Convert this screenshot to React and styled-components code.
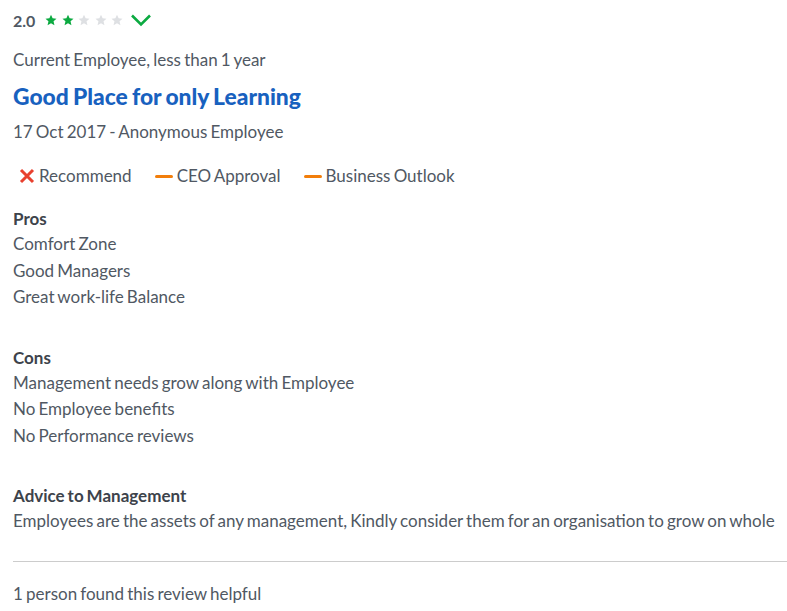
import styled, { createGlobalStyle } from "styled-components";

const GlobalStyle = createGlobalStyle`
  body {
    margin: 0;
    background: #fff;
    font-family: Lato, "Noto Sans", sans-serif;
    color: #505863;
  }
`;

const Star = ({ filled }) => (
  <svg width="12" height="12" viewBox="0 0 24 24">
    <path
      d="M12 1.5l3.2 7.2 7.8.7-5.9 5.2 1.8 7.7L12 18.3l-6.9 4 1.8-7.7L1 9.4l7.8-.7z"
      fill={filled ? "#0caa41" : "#dee0e3"}
    />
  </svg>
);

const Chevron = () => (
  <svg width="22" height="14" viewBox="0 0 22 14">
    <path d="M2 2.5l9 9 9-9" fill="none" stroke="#0caa41" strokeWidth="2.6" />
  </svg>
);

const Cross = () => (
  <svg width="16" height="16" viewBox="0 0 16 16">
    <path d="M2 2l12 12M14 2L2 14" stroke="#e8412f" strokeWidth="3" />
  </svg>
);

const Review = () => {
  const rating = 2;
  return (
    <Wrapper>
      <RatingRow>
        <Score>2.0</Score>
        <Stars>
          {[1, 2, 3, 4, 5].map((n) => (
            <Star key={n} filled={n <= rating} />
          ))}
        </Stars>
        <ChevronBox>
          <Chevron />
        </ChevronBox>
      </RatingRow>

      <Status>Current Employee, less than 1 year</Status>
      <Title href="#">Good Place for only Learning</Title>
      <Byline>17 Oct 2017 - Anonymous Employee</Byline>

      <Badges>
        <Badge>
          <Cross />
          Recommend
        </Badge>
        <Badge>
          <DashMark />
          CEO Approval
        </Badge>
        <Badge>
          <DashMark />
          Business Outlook
        </Badge>
      </Badges>

      <Section $first>
        <SectionTitle>Pros</SectionTitle>
        <Line>Comfort Zone</Line>
        <Line>Good Managers</Line>
        <Line>Great work-life Balance</Line>
      </Section>

      <Section>
        <SectionTitle>Cons</SectionTitle>
        <Line>Management needs grow along with Employee</Line>
        <Line>No Employee benefits</Line>
        <Line>No Performance reviews</Line>
      </Section>

      <Section>
        <SectionTitle>Advice to Management</SectionTitle>
        <Line>
          Employees are the assets of any management, Kindly consider them for
          an organisation to grow on whole
        </Line>
      </Section>

      <Divider />
      <Helpful>1 person found this review helpful</Helpful>
    </Wrapper>
  );
};

const Wrapper = styled.div`
  padding: 9px 0 0 13px;
  font-size: 17px;
  word-spacing: -1.2px;
`;

const RatingRow = styled.div`
  display: flex;
  align-items: center;
  height: 22px;
`;

const Score = styled.span`
  font-size: 16px;
  font-weight: 700;
  word-spacing: 0;
  color: #505863;
  margin-right: 10px;
`;

const Stars = styled.div`
  display: flex;
  gap: 4.5px;
`;

const ChevronBox = styled.div`
  display: flex;
  margin-left: 7px;
`;

const Status = styled.div`
  line-height: 24px;
  margin-top: 17px;
`;

const Title = styled.a`
  display: block;
  font-size: 22.8px;
  font-weight: 900;
  color: #1861bf;
  text-decoration: none;
  line-height: 28px;
  margin: 10px 0;
`;

const Byline = styled.div`
  line-height: 24px;
`;

const Badges = styled.div`
  display: flex;
  gap: 23px;
  margin-top: 20px;
  padding-left: 6px;
  line-height: 24px;
`;

const Badge = styled.div`
  display: flex;
  align-items: center;
  gap: 4px;
`;

const DashMark = styled.span`
  display: inline-block;
  width: 18px;
  height: 3px;
  border-radius: 2px;
  background: #f27e0a;
`;

const Section = styled.div`
  margin-top: ${(p) => (p.$first ? "19px" : "35px")};
`;

const SectionTitle = styled.div`
  font-size: 17px;
  font-weight: 700;
  line-height: 24px;
  color: #3d434b;
`;

const Line = styled.div`
  line-height: 26.5px;
`;

const Divider = styled.hr`
  border: 0;
  border-top: 1px solid #cccccc;
  margin: 26px 0 0;
`;

const Helpful = styled.div`
  line-height: 24px;
  margin-top: 20px;
`;

export default function App() {
  return (
    <>
      <GlobalStyle />
      <Review />
    </>
  );
}
